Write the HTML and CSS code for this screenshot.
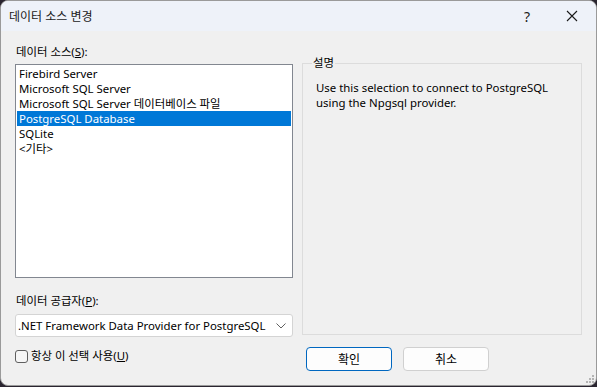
FILE: index.html
```html
<!DOCTYPE html>
<html lang="ko">
<head>
  <meta charset="UTF-8" />
  <title>데이터 소스 변경</title>
  <link rel="stylesheet" href="styles.css">
</head>
<body>
  <div class="window">
    <div class="titlebar">
      <span class="title">데이터 소스 변경</span>
      <div class="title-buttons">
        <span class="help">?</span>
        <svg class="close" width="12" height="12" viewBox="0 0 12 12">
          <path d="M1 1 L11 11 M11 1 L1 11" stroke="#1a1a1a" stroke-width="1.1" fill="none"/>
        </svg>
      </div>
    </div>

    <div class="content">
      <div class="left">
        <div class="label">데이터 소스(<u>S</u>):</div>
        <div class="listbox">
          <div class="item">Firebird Server</div>
          <div class="item">Microsoft SQL Server</div>
          <div class="item">Microsoft SQL Server 데이터베이스 파일</div>
          <div class="item selected">PostgreSQL Database</div>
          <div class="item">SQLite</div>
          <div class="item">&lt;기타&gt;</div>
        </div>

        <div class="label provider-label">데이터 공급자(<u>P</u>):</div>
        <div class="combo">
          <span>.NET Framework Data Provider for PostgreSQL</span>
          <svg width="10" height="6" viewBox="0 0 10 6">
            <path d="M0.5 0.5 L5 5 L9.5 0.5" stroke="#606060" stroke-width="1" fill="none"/>
          </svg>
        </div>

        <label class="check-row">
          <span class="checkbox"></span>
          <span>항상 이 선택 사용(<u>U</u>)</span>
        </label>
      </div>

      <div class="right">
        <fieldset class="group">
          <legend>설명</legend>
          <p>Use this selection to connect to PostgreSQL<br>using the Npgsql provider.</p>
        </fieldset>
        <div class="buttons">
          <button class="btn default">확인</button>
          <button class="btn">취소</button>
        </div>
      </div>
    </div>

    <svg class="grip" width="10" height="10" viewBox="0 0 10 10">
      <rect x="7" y="1" width="2" height="2" fill="#b4b4b4"/>
      <rect x="4" y="4" width="2" height="2" fill="#b4b4b4"/>
      <rect x="7" y="4" width="2" height="2" fill="#b4b4b4"/>
      <rect x="1" y="7" width="2" height="2" fill="#b4b4b4"/>
      <rect x="4" y="7" width="2" height="2" fill="#b4b4b4"/>
      <rect x="7" y="7" width="2" height="2" fill="#b4b4b4"/>
    </svg>
  </div>
</body>
</html>
```

FILE: styles.css
```css
* {
  box-sizing: border-box;
}

body {
  margin: 0;
  background-color: #2a2530;
  font-family: 'Noto Sans', 'Noto Sans CJK KR', sans-serif;
  font-size: 11.4px;
  color: #000;
}

.window {
  width: 597px;
  height: 386px;
  background-color: #f0f0f0;
  border-radius: 8px;
  border: 1px solid #9a9a9a;
  overflow: hidden;
  display: flex;
  flex-direction: column;
  position: relative;
}

.titlebar {
  height: 30px;
  background-color: #eef2f9;
  display: flex;
  justify-content: space-between;
  align-items: center;
  padding-left: 8px;
  flex-shrink: 0;
}

.title {
  font-size: 12px;
  color: #1a1a1a;
}

.title-buttons {
  display: flex;
  align-items: center;
}

.help {
  width: 46px;
  text-align: center;
  font-size: 14px;
  color: #1a1a1a;
}

.close {
  margin: 0 18px 0 16px;
}

.content {
  flex: 1;
  display: flex;
  gap: 9px;
  padding: 13px 14px 0;
}

.left {
  width: 278px;
  display: flex;
  flex-direction: column;
}

.label {
  line-height: 16px;
  height: 16px;
  padding-left: 1px;
  margin-bottom: 4px;
}

.listbox {
  height: 214px;
  background-color: #fff;
  border: 1px solid #828790;
  padding: 1px;
}

.item {
  height: 15px;
  line-height: 15px;
  padding-left: 2px;
  white-space: nowrap;
}

.item.selected {
  background-color: #0078d7;
  color: #fff;
}

.provider-label {
  margin-top: 15px;
  margin-bottom: 5px;
}

.combo {
  height: 23px;
  background-color: #fff;
  border: 1px solid #d4d4d4;
  border-radius: 3px;
  display: flex;
  justify-content: space-between;
  align-items: center;
  padding: 0 6px 0 2px;
  white-space: nowrap;
}

.check-row {
  display: flex;
  align-items: center;
  gap: 3px;
  margin-top: 11px;
  line-height: 16px;
}

.checkbox {
  width: 13px;
  height: 13px;
  border: 1px solid #5f5f5f;
  border-radius: 3px;
  background-color: #f6f6f6;
}

.right {
  width: 280px;
  display: flex;
  flex-direction: column;
}

.group {
  margin: 12px 0 0;
  height: 279px;
  border: 1px solid #dcdcdc;
  padding: 0 12px;
}

.group legend {
  padding: 0 1px;
  margin-left: -3px;
  line-height: 14px;
}

.group p {
  margin: 10px 0 0 1px;
  line-height: 15px;
}

.buttons {
  display: flex;
  gap: 11px;
  padding-left: 4px;
  margin-top: 12px;
}

.btn {
  width: 86px;
  height: 24px;
  font-family: 'Noto Sans', 'Noto Sans CJK KR', sans-serif;
  font-size: 12px;
  background-color: #fdfdfd;
  border: 1px solid #d0d0d0;
  border-radius: 4px;
  padding: 0;
  color: #000;
}

.btn.default {
  border-color: #0067c0;
}

.grip {
  position: absolute;
  right: 1px;
  bottom: 1px;
}
```
